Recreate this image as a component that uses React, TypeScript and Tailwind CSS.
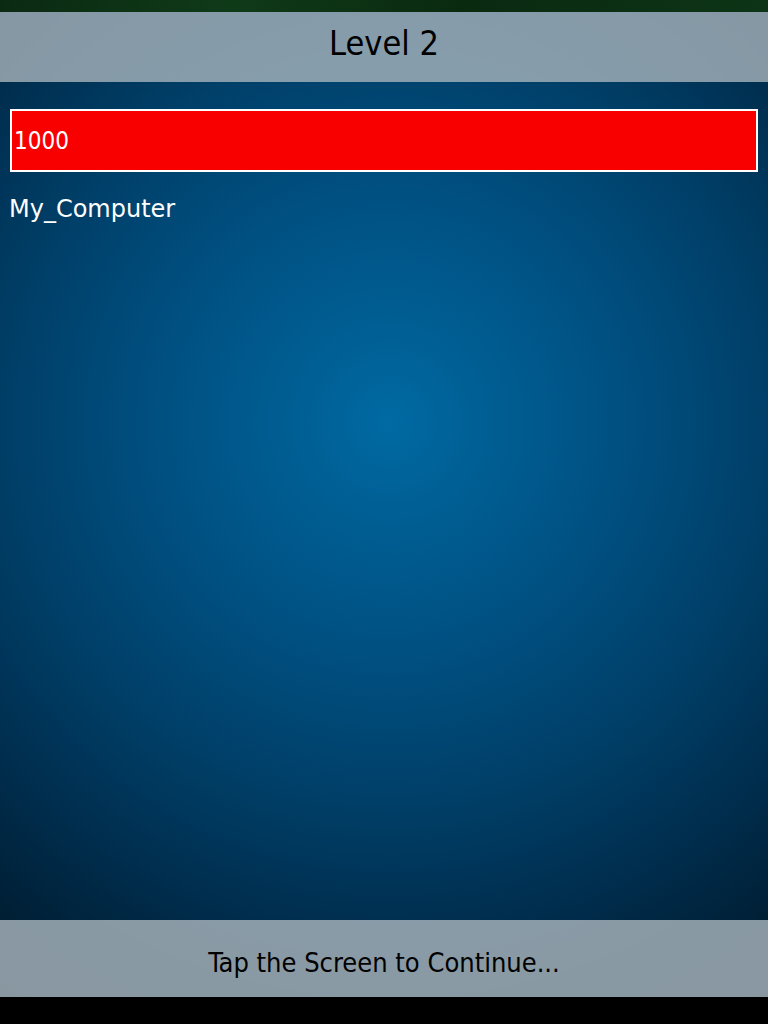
import React from "react";

export default function App() {
    return (
        <div className="w-[768px] h-[1024px] flex flex-col bg-black overflow-hidden" style={{ fontFamily: '"DejaVu Sans", sans-serif' }}>
            {/* green strip from the scene behind */}
            <div className="h-[12px] bg-[linear-gradient(90deg,#0b2a12,#0f3a18_30%,#0a2a10_60%,#0d3416)]" />

            <div className="relative flex-1 flex flex-col bg-[radial-gradient(circle_at_390px_410px,#006aa2_0px,#005d92_110px,#004f80_240px,#003f68_380px,#002f50_500px,#002036_620px,#00172a_720px)]">
                <div className="h-[70px] flex items-center justify-center bg-[#a8b4bccc] pb-[8px]">
                    <p className="text-[34px] text-black leading-none" style={{ fontFamily: '"DejaVu Sans Condensed", "DejaVu Sans", sans-serif' }}>Level 2</p>
                </div>

                <div className="flex-1 flex flex-col px-[10px] pt-[27px]">
                    <div className="h-[63px] border-2 border-white bg-[#f80000] flex items-center px-[2px]">
                        <span className="text-[24px] text-white" style={{ fontFamily: '"DejaVu Sans Condensed", "DejaVu Sans", sans-serif' }}>1000</span>
                    </div>
                    <p className="mt-[25px] -ml-[1px] text-[24px] text-white leading-none">My_Computer</p>
                </div>

                <div className="h-[77px] flex items-center justify-center bg-[#a8b4bcd0] pt-[9px]">
                    <p className="text-[27px] text-black" style={{ fontFamily: '"DejaVu Sans Condensed", "DejaVu Sans", sans-serif' }}>Tap the Screen to Continue...</p>
                </div>
            </div>

            <div className="h-[27px] bg-black" />
        </div>
    );
}
